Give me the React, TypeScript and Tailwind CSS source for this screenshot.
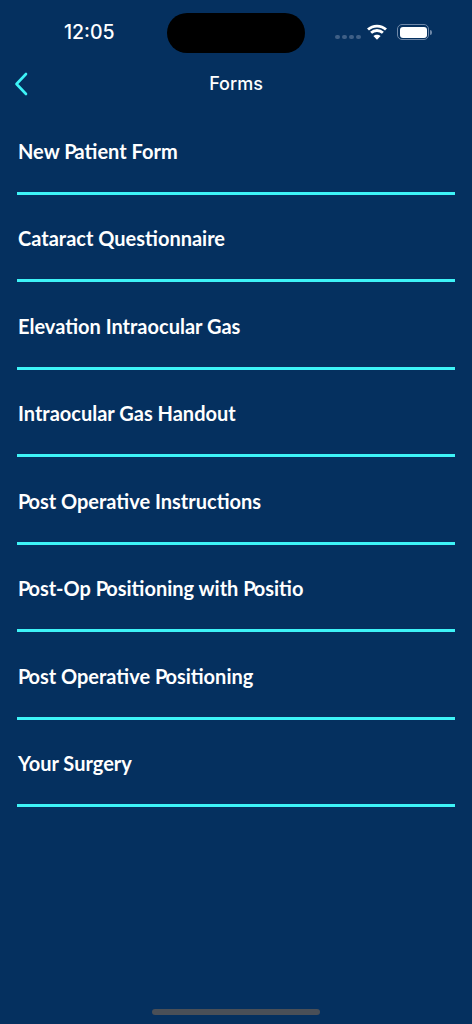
const forms = [
  'New Patient Form',
  'Cataract Questionnaire',
  'Elevation Intraocular Gas',
  'Intraocular Gas Handout',
  'Post Operative Instructions',
  'Post-Op Positioning with Positio',
  'Post Operative Positioning',
  'Your Surgery',
];

function FormLabel({ text }: { text: string }) {
  const parts = text.split(/(P(?=[a-z]))/);
  return (
    <>
      {parts.map((part, i) =>
        part === 'P' ? (
          <span key={i} className="tracking-[-2px]">
            P
          </span>
        ) : (
          <span key={i}>{part}</span>
        ),
      )}
    </>
  );
}

function StatusBar() {
  return (
    <div className="relative flex h-[66px] items-start font-['Inter',sans-serif] text-white">
      <div className="ml-[64px] mt-[20px] text-[19.5px] font-medium leading-6">12:05</div>
      {/* dynamic island */}
      <div className="absolute left-[167px] top-[13px] h-[40px] w-[138px] rounded-[20px] bg-black" />
      <div className="absolute left-[335px] top-[35px] flex gap-[2px]">
        <span className="h-[4px] w-[5px] rounded-full bg-[#3f5f86]" />
        <span className="h-[4px] w-[5px] rounded-full bg-[#3f5f86]" />
        <span className="h-[4px] w-[5px] rounded-full bg-[#3f5f86]" />
        <span className="h-[4px] w-[5px] rounded-full bg-[#3f5f86]" />
      </div>
      <svg className="absolute left-[367px] top-[24px]" width="20" height="16" viewBox="0 0 20 16" fill="none">
        <path d="M1 5.6C5.9 0.9 14.1 0.9 19 5.6" stroke="white" strokeWidth="2.8" />
        <path d="M4.1 8.8C7.4 5.7 12.6 5.7 15.9 8.8" stroke="white" strokeWidth="2.8" />
        <path d="M10 15.8L6.4 12C8.4 10.2 11.6 10.2 13.6 12Z" fill="white" />
      </svg>
      <div className="absolute left-[397px] top-[24px] flex items-center">
        <div className="h-[16px] w-[32px] rounded-[5px] border border-[#6f88a8] p-[1.5px]">
          <div className="h-full w-full rounded-[3px] bg-white" />
        </div>
        <div className="ml-[1px] h-[5px] w-[1.5px] rounded-r-full bg-[#6f88a8]" />
      </div>
    </div>
  );
}

export default function App() {
  return (
    <div className="relative h-[1024px] w-[472px] overflow-hidden bg-[#05305f]">
      <StatusBar />

      {/* Nav bar */}
      <div className="relative flex h-[35px] items-center justify-center">
        <svg className="absolute left-[14px] top-[6px]" width="15" height="24" viewBox="0 0 15 24" fill="none">
          <path d="M12 2L2.5 12L12 22" stroke="#3ef3f7" strokeWidth="2.6" strokeLinecap="round" strokeLinejoin="round" />
        </svg>
        <h1 className="font-['Inter',sans-serif] text-[18px] font-medium text-white">Forms</h1>
      </div>

      {/* Form list */}
      <div className="mt-[6px]">
        {forms.map((form) => (
          <div key={form} className="mx-[17px] flex h-[87.5px] items-start border-b-[3px] border-[#3ef3f7]">
            <span className="mt-[29.5px] ml-[1px] font-['Lato',sans-serif] text-[20px] font-bold leading-7 text-white">
              <FormLabel text={form} />
            </span>
          </div>
        ))}
      </div>

      {/* Home indicator */}
      <div className="absolute bottom-[9px] left-[152px] h-[6px] w-[168px] rounded-full bg-[#4a4f57]" />
    </div>
  );
}
